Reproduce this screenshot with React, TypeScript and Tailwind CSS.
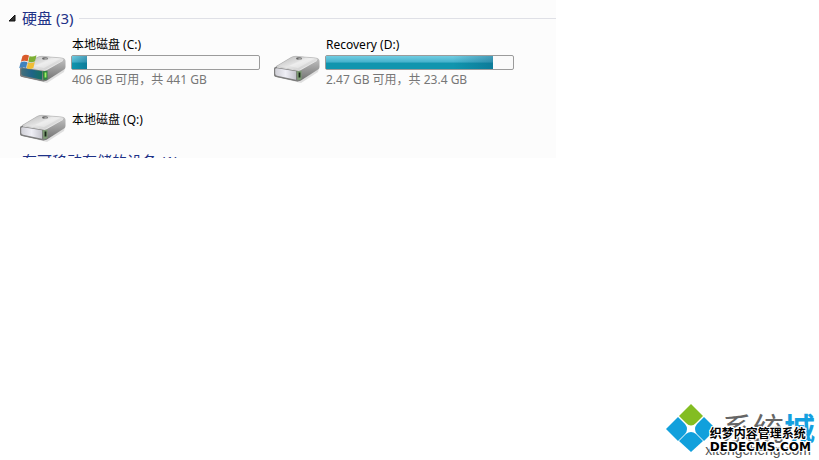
import { clsx } from 'clsx'

type Drive = {
  name: string
  detail?: string
  used?: number
  system?: boolean
}

const drives: Drive[] = [
  { name: '本地磁盘 (C:)', detail: '406 GB 可用，共 441 GB', used: 8, system: true },
  { name: 'Recovery (D:)', detail: '2.47 GB 可用，共 23.4 GB', used: 89.5 },
  { name: '本地磁盘 (Q:)' },
]

function DriveIcon({ id, system }: { id: string; system?: boolean }) {
  return (
    <svg viewBox="0 0 48 30" className="h-[30px] w-12" aria-hidden="true">
      <defs>
        <linearGradient id={`${id}-top`} x1="0" y1="0" x2="1" y2="1">
          <stop offset="0" stopColor="#b4b4b4" />
          <stop offset="0.5" stopColor="#e6e6e6" />
          <stop offset="1" stopColor="#bdbdbd" />
        </linearGradient>
        <linearGradient id={`${id}-side`} x1="0" y1="0" x2="0" y2="1">
          <stop offset="0" stopColor="#c9c9c9" />
          <stop offset="1" stopColor="#6e6e6e" />
        </linearGradient>
        <linearGradient id={`${id}-front`} x1="0" y1="0" x2="1" y2="0">
          <stop offset="0" stopColor={system ? '#46707a' : '#cfcfd6'} />
          <stop offset="0.5" stopColor={system ? '#1f6488' : '#efeff6'} />
          <stop offset="1" stopColor={system ? '#15705f' : '#c4c4cc'} />
        </linearGradient>
      </defs>
      <path d="M3 24 L26 29 L46 15 L45 19 L28 30 Z" fill="#999" opacity="0.3" />
      {/* body, lid, then the front bezel */}
      <path
        d="M1 16 Q1 14.500 3 13.500 L18 4.500 Q20 3.300 23 3.300 L43 5 Q46.500 5.500 46.500 8 L46.500 14 Q46.500 15.500 45 16.500 L28 27.500 Q26 28.800 23 28.300 L3 24 Q1 23.500 1 21.500 Z"
        fill={`url(#${id}-side)`}
      />
      <path
        d="M3 13.500 L18 4.500 Q20 3.300 23 3.300 L43 5 Q46.500 5.500 44.500 7.500 L28 17 Q26.500 18 24 17.500 Z"
        fill={`url(#${id}-top)`}
        stroke="#a5a5a5"
        strokeWidth="0.5"
      />
      <path d="M16 13 L33 4.500 L42 5.500 L25 15 Z" fill="#fff" opacity="0.3" />
      <path d="M1 16 Q1 14 3 14 L27 17.500 L27 27.500 Q25 28.500 23 28 L3 23.800 Q1 23.300 1 21.500 Z" fill="#7e7e7e" />
      <path
        d="M2.200 16.500 Q2.200 15 4 15.200 L23 18.200 L23 26.700 L4 22.700 Q2.200 22.300 2.200 20.500 Z"
        fill={`url(#${id}-front)`}
      />
      <path d="M4 14.100 L26 17.500 L44 7.500" fill="none" stroke="#ededed" strokeWidth="0.8" />
      <path d="M23.500 18.200 L28.500 17.800 L28.500 26.300 L24.500 27.300 Z" fill={system ? '#2d8540' : '#7d9c74'} />
      <path d="M26.500 19.500 L26.500 24.500" stroke={system ? '#a0f260' : '#182618'} strokeWidth="1.8" />
      <ellipse cx="26" cy="5.500" rx="3" ry="1.300" fill="#666" />
      <ellipse cx="26.800" cy="6" rx="1.800" ry="0.700" fill="#bbb" />
      {system && (
        <g>
          <path d="M3.500 3 Q6.500 0.800 10 2.600 L8.600 8.400 Q5 7 1.900 8.800 Z" fill="#d95b2b" />
          <path d="M10.600 2.900 Q13.500 4.300 17.500 2.300 L16 8.300 Q12.500 10 9.200 8.600 Z" fill="#7daf34" />
          <path d="M1.600 9.500 Q4.800 7.900 8.400 9.200 L7 15 Q3.500 13.600 0.200 15.300 Z" fill="#3f82bd" />
          <path d="M9.100 9.500 Q12 10.800 15.800 9.100 L14.400 15 Q11 16.800 7.700 15.300 Z" fill="#f0bd35" />
        </g>
      )}
    </svg>
  )
}

function DriveItem({ drive, id }: { drive: Drive; id: string }) {
  return (
    <li className="flex items-start gap-1">
      <div className={clsx('shrink-0', drive.detail && 'pt-4')}>
        <DriveIcon id={id} system={drive.system} />
      </div>
      <div className="min-w-0 flex-1">
        <h3 className="pl-px text-[12px] leading-4 text-black">{drive.name}</h3>
        {drive.used !== undefined && (
          <div
            role="progressbar"
            aria-label={drive.name}
            aria-valuenow={drive.used}
            className="mt-0.5 h-[15px] rounded-xs border border-[#9b9b9b] bg-[#fafafa]"
          >
            <div
              className="h-full bg-linear-to-b from-[#71cde2] from-0% via-[#45b3cd] via-45% to-[#1095ae] to-55%"
              style={{ width: `${drive.used}%` }}
            >
              <div className="ml-auto h-full w-full max-w-10 bg-linear-to-r from-transparent to-[#07557a]/40" />
            </div>
          </div>
        )}
        {drive.detail && <p className="mt-0.5 pl-px text-[12px] leading-4 text-[#777]">{drive.detail}</p>}
      </div>
    </li>
  )
}

function Watermark() {
  return (
    <div className="absolute right-0 bottom-0 h-[60px] w-[156px]">
      <svg viewBox="0 0 52 52" className="size-[52px]" aria-hidden="true">
        <path d="M28 4 L40 16 L33 23 Q28 28 23 23 L16 16 Z" fill="#83bd22" />
        <path d="M15 17 L22 24 Q26 29 22 34 L15 41 L3 29 Z" fill="#11a0dc" />
        <path d="M41 17 L52 28 L52 30 L41 41 L34 34 Q30 29 34 24 Z" fill="#11a0dc" />
        <path d="M28 52 L16 41 L23 34 Q28 30 33 34 L40 41 Z" fill="#11a0dc" />
      </svg>
      <div className="absolute top-2 right-1 text-[31px] leading-10 whitespace-nowrap text-[#666]">
        系统<span className="font-bold text-[#14a0e0]">城</span>
      </div>
      <div className="absolute right-2 bottom-0 font-['Liberation_Sans',sans-serif] text-[14px] leading-5 text-[#555]">
        xitongcheng.com
      </div>
      <div className="absolute right-2 bottom-2 font-bold whitespace-nowrap text-black [text-shadow:1px_0_#fff,-1px_0_#fff,0_1px_#fff,0_-1px_#fff,1px_1px_#fff,-1px_-1px_#fff,1px_-1px_#fff,-1px_1px_#fff]">
        <p className="text-[12px] leading-4">织梦内容管理系统</p>
        <p className="font-['DejaVu_Sans',sans-serif] text-[12px] leading-[10px]">DEDECMS.COM</p>
      </div>
    </div>
  )
}

export default function App() {
  return (
    <main className="relative min-h-screen overflow-hidden bg-white font-['Noto_Sans','Noto_Sans_CJK_SC',sans-serif]">
      <section className="max-w-[556px] bg-[#fcfcfc] pt-[7px]">
        <div className="flex items-center pl-2">
          <svg viewBox="0 0 8 8" className="mr-1.5 size-2" aria-hidden="true">
            <path d="M7 1 V7 H1 Z" fill="#333" stroke="#111" />
          </svg>
          <h2 className="text-[15px] leading-[22px] text-[#1e3287]">硬盘 (3)</h2>
          <div className="ml-1.5 h-px flex-1 bg-[#dfe0e6]" />
        </div>
        <ul className="grid grid-cols-[241px_241px] gap-x-[13px] gap-y-6 pt-2 pl-[19px]">
          {drives.map((drive, i) => (
            <DriveItem key={drive.name} drive={drive} id={`drive-${i}`} />
          ))}
        </ul>
        <div className="mt-2 h-2 overflow-hidden pl-[22px]">
          <h2 className="text-[15px] leading-[22px] text-[#1e3287]">有可移动存储的设备 (1)</h2>
        </div>
      </section>
      <Watermark />
    </main>
  )
}
